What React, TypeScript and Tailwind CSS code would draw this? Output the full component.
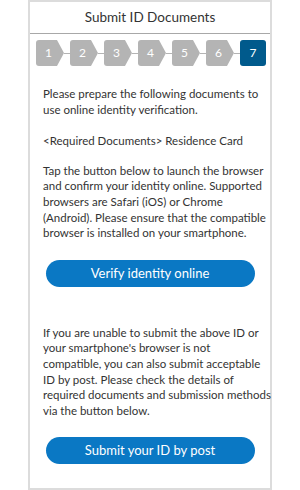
import React from "react";

const font = { fontFamily: "Lato, 'Noto Sans', sans-serif" };

function GrayStep({ n }: { n: number }) {
  return (
    <div className="flex items-center">
      <div className="relative h-[26px] w-[28px]">
        <svg width="28" height="26" viewBox="0 0 28 26" className="absolute inset-0">
          <path d="M3 0 H21 L28 13 L21 26 H3 Q0 26 0 23 V3 Q0 0 3 0 Z" fill="#b4b4b4" />
        </svg>
        <span className="absolute inset-0 flex items-center justify-center pr-[3px] text-[12px] text-white">
          {n}
        </span>
      </div>
      <div className="h-px w-[6px] bg-[#b4b4b4]" />
    </div>
  );
}

function BlueButton({ label }: { label: string }) {
  return (
    <button
      type="button"
      className="mx-auto flex h-[27px] w-[209px] items-center justify-center rounded-full bg-[#0a78c4] text-[13px] text-white"
    >
      {label}
    </button>
  );
}

export default function App() {
  return (
    <div className="flex h-[490px] w-[300px] justify-center bg-white" style={font}>
      <div className="flex h-[490px] w-[244px] flex-col border-2 border-[#dcdcdc] text-[#333]">
        <div className="flex h-[32px] items-center justify-center border-b border-[#a8a8a8] text-[13.5px]">
          Submit ID Documents
        </div>

        <div className="flex pl-[6px] pt-[6px]">
          {[1, 2, 3, 4, 5, 6].map((n) => (
            <GrayStep key={n} n={n} />
          ))}
          <div className="flex h-[26px] w-[26px] items-center justify-center rounded-[3px] bg-[#005a8c] text-[12px] text-white">
            7
          </div>
        </div>

        <div className="whitespace-nowrap px-[13px] pt-[20px] text-[11.5px] leading-[15.6px]">
          <p>
            Please prepare the following documents to
            <br />
            use online identity verification.
          </p>
          <p className="mt-[16px]">&lt;Required Documents&gt; Residence Card</p>
          <p className="mt-[14px]">
            Tap the button below to launch the browser
            <br />
            and confirm your identity online. Supported
            <br />
            browsers are Safari (iOS) or Chrome
            <br />
            (Android). Please ensure that the compatible
            <br />
            browser is installed on your smartphone.
          </p>
        </div>

        <div className="pt-[19px]">
          <BlueButton label="Verify identity online" />
        </div>

        <div className="whitespace-nowrap px-[13px] pt-[38px] text-[11.5px] leading-[15.6px]">
          <p>
            If you are unable to submit the above ID or
            <br />
            your smartphone's browser is not
            <br />
            compatible, you can also submit acceptable
            <br />
            ID by post. Please check the details of
            <br />
            required documents and submission methods
            <br />
            via the button below.
          </p>
        </div>

        <div className="pt-[19px]">
          <BlueButton label="Submit your ID by post" />
        </div>
      </div>
    </div>
  );
}
